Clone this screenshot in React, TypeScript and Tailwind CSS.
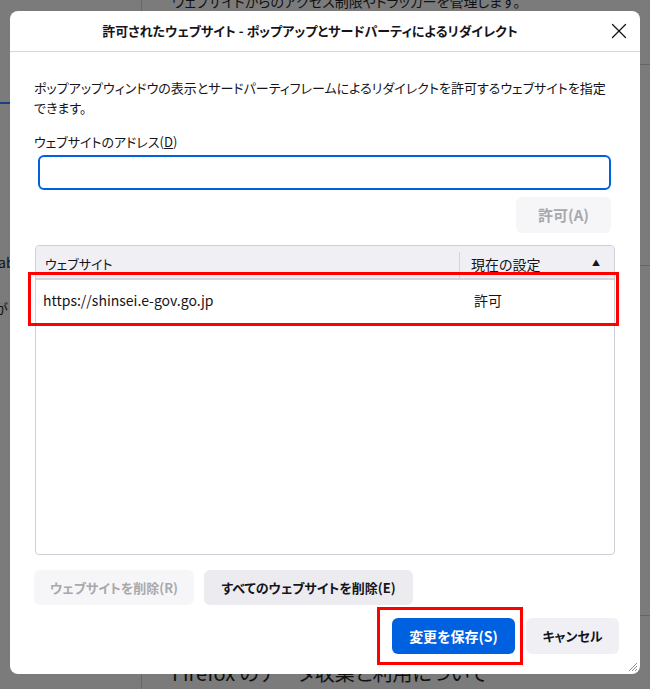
import { X } from "lucide-react";

const font = "[font-family:'Noto_Sans_CJK_JP','Noto_Sans',sans-serif] [font-feature-settings:'palt']";

function ResizeGrip() {
  return (
    <svg width="12" height="12" viewBox="0 0 12 12" className="text-[#8f8f9d]">
      <path d="M11 3 L3 11 M11 6 L6 11 M11 9 L9 11" stroke="currentColor" strokeWidth="1" fill="none" />
    </svg>
  );
}

export default function App() {
  return (
    <div className={`relative w-[650px] h-[689px] overflow-hidden bg-[#7b7b7b] text-[#111] ${font}`}>
      {/* page behind the dialog */}
      <div className="flex h-full">
        <aside className="w-[142px] shrink-0 border-r border-[#666] flex flex-col">
          <div className="mt-[102px] h-[2px] w-[40px] bg-[#1a3f8a]" />
          <div className="mt-[148px] -ml-[2px] text-[14px] leading-[20px]">ab</div>
          <div className="mt-[26px] -ml-[6px] text-[14px] leading-[20px]">が</div>
        </aside>
        <main className="flex-1 flex flex-col">
          <p className="-mt-[9px] ml-[30px] text-[14px] leading-[20px]">
            ウェブサイトからのアクセス制限やトラッカーを管理します。
          </p>
          <div className="mt-[53px] border-t border-[#666]" />
          <div className="mt-[200px] border-t border-[#666]" />
          <div className="mt-[349px] border-t border-[#666]" />
          <p className="mt-auto mb-[2px] ml-[30px] text-[20px] leading-[28px]">
            Firefox のデータ収集と利用について
          </p>
        </main>
      </div>

      {/* dialog */}
      <div className="absolute left-[10px] top-[11px] w-[630px] h-[663px] bg-white rounded-[8px] flex flex-col text-[#15141a]">
        <header className="relative h-[41px] shrink-0 border-b border-[#d7d7db] flex items-center justify-center pr-[30px]">
          <h1 className="text-[13px] font-bold">
            許可されたウェブサイト - ポップアップとサードパーティによるリダイレクト
          </h1>
          <button className="absolute right-[8px] top-[7px] text-[#15141a]">
            <X size={26} strokeWidth={1.2} />
          </button>
        </header>

        <div className="flex-1 flex flex-col pl-[24px] pr-[21px] pt-[26px] pb-[20px]">
          <p className="text-[13px] leading-[20px] whitespace-nowrap">
            ポップアップウィンドウの表示とサードパーティフレームによるリダイレクトを許可するウェブサイトを指定
            <br />
            できます。
          </p>
          <label className="mt-[14px] text-[13px] leading-[20px]">
            ウェブサイトのアドレス(<span className="underline">D</span>)
          </label>
          <input className="mt-[3px] ml-[4px] w-[573px] h-[35px] border-2 border-[#0061e0] rounded-[6px] outline-none px-2" />
          <div className="mt-[7px] mr-[8px] flex justify-end">
            <button className="w-[95px] h-[36px] rounded-[6px] bg-[#f6f6f8] text-[#a8a8ad] text-[15px] font-semibold">
              許可(A)
            </button>
          </div>

          {/* site list */}
          <div className="mt-[12px] ml-[1px] w-[580px] h-[310px] border border-[#cfcfd8] rounded-[4px] overflow-hidden flex flex-col">
            <div className="h-[34px] shrink-0 bg-[#f0f0f4] border-b-2 border-[#d5d5da] flex text-[13px]">
              <div className="w-[423px] pl-[9px] flex items-center pt-[4px]">ウェブサイト</div>
              <div className="flex-1 mt-[6px] border-l border-[#d5d5da] pl-[11px] pr-[14px] flex items-center justify-between">
                <span className="-mt-[2px] text-[14px]">現在の設定</span>
                <span className="text-[8px] -mt-[4px]">▲</span>
              </div>
            </div>
            <div className="h-[40px] flex items-center text-[14px]">
              <div className="w-[423px] pl-[7px]">https://shinsei.e-gov.go.jp</div>
              <div className="pl-[15px]">許可</div>
            </div>
          </div>

          <div className="mt-[15px] flex gap-[10px]">
            <button className="w-[160px] h-[35px] rounded-[6px] bg-[#f6f6f8] text-[#a8a8ad] text-[13px] font-semibold">
              ウェブサイトを削除(R)
            </button>
            <button className="w-[209px] h-[35px] rounded-[6px] bg-[#ececf0] text-[#15141a] text-[13px] font-semibold">
              すべてのウェブサイトを削除(E)
            </button>
          </div>

          <div className="mt-auto flex justify-end gap-[11px]">
            <button className="w-[123px] h-[36px] rounded-[6px] bg-[#0061e0] text-white text-[14px] font-semibold">
              変更を保存(S)
            </button>
            <button className="w-[93px] h-[36px] rounded-[6px] bg-[#f0f0f4] text-[#15141a] text-[13px] font-semibold">
              キャンセル
            </button>
          </div>
        </div>

        <div className="absolute right-[2px] bottom-[2px]">
          <ResizeGrip />
        </div>

        {/* red highlight annotations */}
        <div className="absolute left-[18px] top-[261px] w-[591px] h-[54px] border-[3px] border-[#ff0000]" />
        <div className="absolute left-[367px] top-[596px] w-[146px] h-[58px] border-[3px] border-[#ff0000]" />
      </div>
    </div>
  );
}
